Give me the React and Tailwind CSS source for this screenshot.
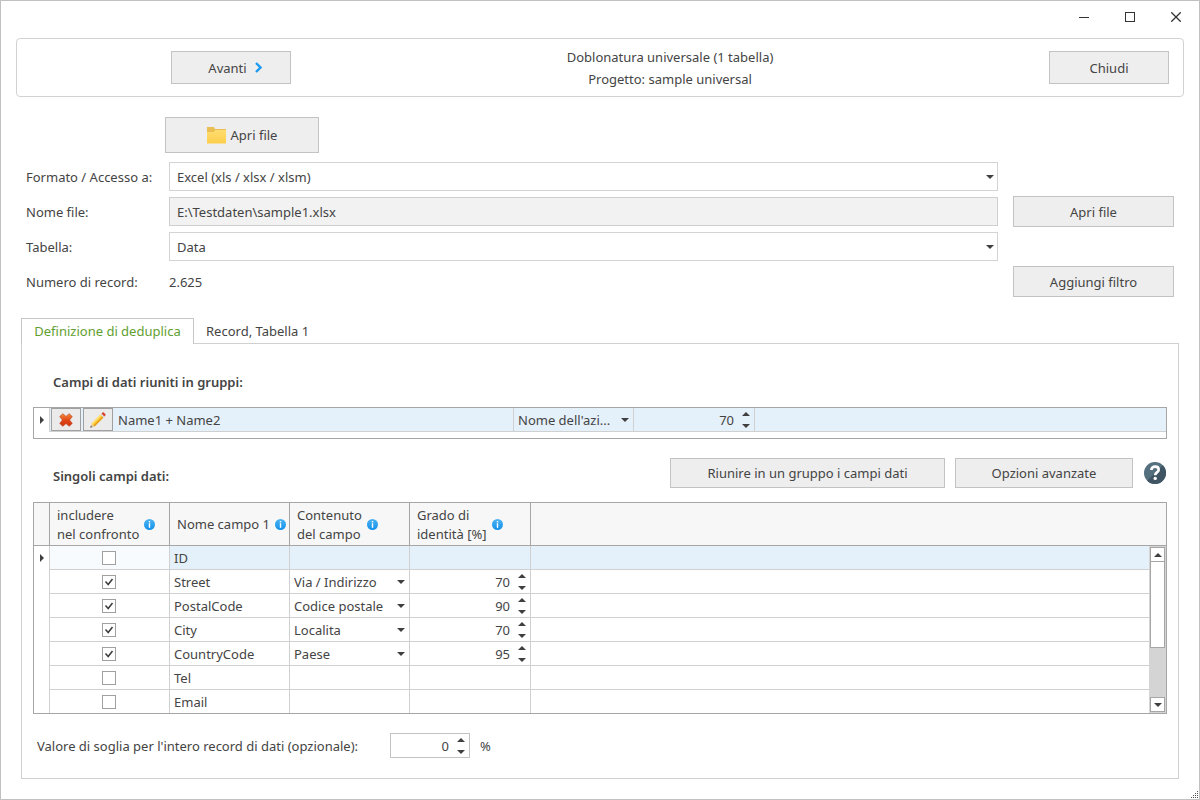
import React, { useState } from 'react';

const initialRows = [
  { name: 'ID', include: false, content: '', grade: '' },
  { name: 'Street', include: true, content: 'Via / Indirizzo', grade: '70' },
  { name: 'PostalCode', include: true, content: 'Codice postale', grade: '90' },
  { name: 'City', include: true, content: 'Localita', grade: '70' },
  { name: 'CountryCode', include: true, content: 'Paese', grade: '95' },
  { name: 'Tel', include: false, content: '', grade: '' },
  { name: 'Email', include: false, content: '', grade: '' },
];

const buttonStyle = 'border border-[#c3c3c3] bg-[#eeeeee] hover:bg-[#e4e4e4] text-center';

function ArrowDown({ className = '' }) {
  return (
    <svg className={`w-2 h-1 ${className}`} viewBox="0 0 8 4" aria-hidden="true">
      <path d="M0 0h8L4 4z" fill="#3f3f3f" />
    </svg>
  );
}

function ArrowUp({ className = '' }) {
  return (
    <svg className={`w-2 h-1 ${className}`} viewBox="0 0 8 4" aria-hidden="true">
      <path d="M0 4h8L4 0z" fill="#3f3f3f" />
    </svg>
  );
}

function RowMarker() {
  return (
    <svg className="w-1 h-2 mx-auto" viewBox="0 0 4 8" aria-hidden="true">
      <path d="M0 0v8l4-4z" fill="#3f3f3f" />
    </svg>
  );
}

function InfoIcon() {
  return (
    <svg className="w-[11px] h-[11px] shrink-0" viewBox="0 0 11 11" aria-hidden="true">
      <defs>
        <linearGradient id="info" x1="0" y1="0" x2="0" y2="1">
          <stop offset="0" stopColor="#4db4f2" />
          <stop offset="1" stopColor="#1290ea" />
        </linearGradient>
      </defs>
      <circle cx="5.5" cy="5.5" r="5.5" fill="url(#info)" />
      <rect x="4.8" y="2" width="1.4" height="1.4" fill="#fff" />
      <rect x="4.8" y="4.2" width="1.4" height="4.6" fill="#fff" />
    </svg>
  );
}

function FolderIcon() {
  return (
    <svg className="w-5 h-[17px]" viewBox="0 0 20 17" aria-hidden="true">
      <defs>
        <linearGradient id="folder" x1="0" y1="0" x2="0" y2="1">
          <stop offset="0" stopColor="#ffdc70" />
          <stop offset="1" stopColor="#ffcf4b" />
        </linearGradient>
      </defs>
      <path d="M0 0h7l1 2h11v4H0z" fill="#e9bf55" />
      <path d="M0 5h7l1-2h11v13.500H0z" fill="url(#folder)" />
    </svg>
  );
}

function DeleteIcon() {
  return (
    <svg className="w-[14px] h-[14px]" viewBox="0 0 14 14" aria-hidden="true">
      <defs>
        <linearGradient id="cross" x1="0" y1="0" x2="0" y2="1">
          <stop offset="0" stopColor="#f58a3c" />
          <stop offset="0.55" stopColor="#df4413" />
          <stop offset="1" stopColor="#cf3510" />
        </linearGradient>
      </defs>
      <path
        d="M3.8.7L7 3.400 10.200.7l3.100 2.900L10.600 7l2.700 3.400-3.100 2.900L7 10.600l-3.200 2.700L.7 10.400 3.400 7 .7 3.600z"
        fill="url(#cross)"
        stroke="#b8401a"
        strokeWidth="0.6"
        strokeLinejoin="round"
      />
    </svg>
  );
}

function PencilIcon() {
  return (
    <svg className="w-4 h-4" viewBox="0 0 16 16" aria-hidden="true">
      <path d="M.3 15.700L1.600 11.500 4.500 14.400z" fill="#e8c9a0" />
      <path d="M.3 15.700l.6-2 1.400 1.400z" fill="#4a4a4a" />
      <path d="M1.600 11.500L10.500 2.600l2.900 2.900-8.900 8.900z" fill="#fbc62e" />
      <path d="M1.600 11.500L10.500 2.600l1 1-8.900 8.900z" fill="#ffe27a" />
      <path d="M3.600 13.500l8.900-8.900.9.9-8.900 8.900z" fill="#e39a1c" />
      <path d="M10.500 2.600l1-1 2.900 2.900-1 1z" fill="#d5d8dc" />
      <path d="M11.500 1.600l.9-.9c.5-.5 1.100-.5 1.600 0l1.300 1.300c.5.5.5 1.100 0 1.600l-.9.9z" fill="#d8432f" />
    </svg>
  );
}

function HelpIcon() {
  return (
    <svg className="w-6 h-6" viewBox="0 0 24 24" aria-hidden="true">
      <circle cx="12" cy="12" r="11" fill="#54707e" />
      <path d="M19.800 4.200A11 11 0 0 1 4.200 19.800z" fill="#3f5563" />
      <path
        d="M8.400 9.100c0-2.200 1.500-3.500 3.700-3.500s3.600 1.200 3.600 3.100c0 2.700-3.500 2.700-3.500 5.500"
        fill="none"
        stroke="#fff"
        strokeWidth="2.6"
      />
      <circle cx="12.2" cy="17.4" r="1.7" fill="#fff" />
    </svg>
  );
}

function Spinner({ value, onChange, label, id }) {
  const step = (n) => onChange(String(Math.min(100, Math.max(0, Number(value) + n))));

  return (
    <div className="flex items-center h-full w-full pr-1">
      <input
        id={id}
        aria-label={label}
        type="text"
        inputMode="numeric"
        value={value}
        onChange={(e) => onChange(e.target.value)}
        className="min-w-0 flex-1 h-full text-right bg-transparent outline-none"
      />
      <div className="flex flex-col ml-2">
        <button type="button" aria-label="Aumenta" onClick={() => step(1)} className="flex h-2 items-start">
          <ArrowUp />
        </button>
        <button type="button" aria-label="Diminuisci" onClick={() => step(-1)} className="flex h-2 items-end">
          <ArrowDown />
        </button>
      </div>
    </div>
  );
}

function CellSelect({ value, label }) {
  return (
    <div className="relative h-full">
      <select
        aria-label={label}
        defaultValue={value}
        className="block appearance-none w-full h-full pl-1 pr-4 bg-transparent outline-none"
      >
        <option>{value}</option>
      </select>
      <ArrowDown className="absolute right-1 top-1/2 -translate-y-1/2 pointer-events-none" />
    </div>
  );
}

function FieldSelect({ id, value }) {
  return (
    <div className="relative h-full">
      <select
        id={id}
        defaultValue={value}
        className="block appearance-none w-full h-full pl-[7px] pr-5 bg-white border border-[#d4d4d4] outline-none"
      >
        <option>{value}</option>
      </select>
      <ArrowDown className="absolute right-1 top-1/2 -translate-y-1/2 pointer-events-none" />
    </div>
  );
}

function HeaderCell({ children, className = '' }) {
  return (
    <th className={`p-0 h-[43px] font-normal text-left border-r border-b border-[#a6a6a6] bg-[#f7f7f7] ${className}`}>
      <div className="flex items-center pt-px pl-[7px] mr-[3px] overflow-hidden whitespace-nowrap">{children}</div>
    </th>
  );
}

function FieldRow({ row, index, last, onChange }) {
  const selected = index === 0;
  const line = `p-0 border-[#d0d0d0] border-r ${last ? 'h-[23px]' : 'h-6 border-b'}`;
  const fill = selected ? 'bg-[#e5f1fa]' : '';

  return (
    <tr>
      <td className="p-0 border-r border-[#d0d0d0]">{selected && <RowMarker />}</td>
      <td className={`${line} ${selected ? 'bg-[#f7fbfe]' : ''}`}>
        <div className="flex justify-center pr-px">
          <input
            type="checkbox"
            aria-label={`Includere ${row.name}`}
            checked={row.include}
            onChange={(e) => onChange(index, { include: e.target.checked })}
            className="peer appearance-none w-[14px] h-[14px] border border-[#a0a0a0] bg-white"
          />
          <svg className="hidden peer-checked:block -ml-[14px] w-[14px] h-[14px] pointer-events-none" viewBox="0 0 14 14" aria-hidden="true">
            <path d="M3.500 6.500l2.700 3 4.300-5.500" fill="none" stroke="#404040" strokeWidth="1.6" />
          </svg>
        </div>
      </td>
      <td className={`${line} ${fill} pl-1`}>{row.name}</td>
      <td className={`${line} ${fill}`}>
        {row.content && (
          <div className="h-[23px]">
            <CellSelect value={row.content} label={`Contenuto di ${row.name}`} />
          </div>
        )}
      </td>
      <td className={`${line} ${fill}`}>
        {row.grade && (
          <div className="h-[23px]">
            <Spinner
              value={row.grade}
              label={`Grado di ${row.name}`}
              onChange={(grade) => onChange(index, { grade })}
            />
          </div>
        )}
      </td>
      <td className={`p-0 border-[#d0d0d0] ${last ? '' : 'border-b'} ${fill}`}></td>
      {index === 0 && (
        <td rowSpan={initialRows.length} className="p-0 align-top bg-[#d4d4d4]">
          <div className="flex flex-col h-[167px] p-px">
            <button type="button" aria-label="Scorri su" className="flex items-center justify-center w-[15px] h-[15px] border border-[#a6a6a6] bg-white">
              <ArrowUp />
            </button>
            <div className="w-[15px] h-[87px] -mt-px border border-[#a6a6a6] bg-white"></div>
            <button type="button" aria-label="Scorri giù" className="flex items-center justify-center w-[15px] h-[15px] mt-auto border border-[#a6a6a6] bg-white">
              <ArrowDown />
            </button>
          </div>
        </td>
      )}
    </tr>
  );
}

export default function App() {
  const [rows, setRows] = useState(initialRows);
  const [groupGrade, setGroupGrade] = useState('70');
  const [threshold, setThreshold] = useState('0');

  const updateRow = (index, changes) => {
    setRows(rows.map((row, i) => (i === index ? { ...row, ...changes } : row)));
  };

  return (
    <div className="relative min-h-screen flex flex-col border border-[#c1c1c1] bg-white text-[#444444] text-[13px] leading-5 font-['Noto_Sans',sans-serif]">
      {/* Window buttons */}
      <div className="flex items-center justify-end gap-9 h-[37px] pr-[18px] pb-[6px]">
        <button type="button" aria-label="Riduci a icona">
          <svg className="w-[10px] h-[10px]" viewBox="0 0 10 10"><path d="M0 5.500h10" stroke="#333" /></svg>
        </button>
        <button type="button" aria-label="Ingrandisci">
          <svg className="w-[10px] h-[10px]" viewBox="0 0 10 10"><rect x="0.5" y="0.5" width="9" height="9" fill="none" stroke="#333" /></svg>
        </button>
        <button type="button" aria-label="Chiudi finestra">
          <svg className="w-[10px] h-[10px]" viewBox="0 0 10 10"><path d="M.3.3l9.400 9.400M9.700.3L.3 9.700" stroke="#333" strokeWidth="1.3" /></svg>
        </button>
      </div>

      {/* Wizard header */}
      <header className="flex items-center h-[59px] mx-[15px] pl-[154px] pr-[14px] border border-[#d2d2d2] rounded">
        <button type="button" className={`${buttonStyle} w-[120px] h-[33px] pl-2 flex items-center justify-center gap-2`}>
          Avanti
          <svg className="w-[7px] h-[11px]" viewBox="0 0 7 11" aria-hidden="true">
            <path d="M1 1l4.500 4.500L1 10" fill="none" stroke="#1a9af0" strokeWidth="2.4" />
          </svg>
        </button>
        <div className="flex-1 text-center leading-[22px]">
          <h1>Doblonatura universale (1 tabella)</h1>
          <p>Progetto: sample universal</p>
        </div>
        <button type="button" className={`${buttonStyle} w-[120px] h-[33px]`}>Chiudi</button>
      </header>

      <button type="button" className={`${buttonStyle} flex items-center justify-center gap-1 w-[154px] h-9 mt-5 ml-[164px]`}>
        <FolderIcon />
        Apri file
      </button>

      {/* Source file */}
      <div className="grid grid-cols-[128px_1fr_161px] auto-rows-[29px] gap-x-[15px] gap-y-[6px] items-center mt-[9px] px-[25px]">
        <label htmlFor="format" className="whitespace-nowrap">Formato / Accesso a:</label>
        <FieldSelect id="format" value="Excel (xls / xlsx / xlsm)" />
        <span></span>

        <label htmlFor="filename">Nome file:</label>
        <input
          id="filename"
          readOnly
          value="E:\Testdaten\sample1.xlsx"
          className="w-full h-full px-[7px] bg-[#f2f2f2] border border-[#cfcfcf] outline-none"
        />
        <button type="button" className={`${buttonStyle} h-[31px]`}>Apri file</button>

        <label htmlFor="table">Tabella:</label>
        <FieldSelect id="table" value="Data" />
        <span></span>

        <span>Numero di record:</span>
        <span>2.625</span>
        <button type="button" className={`${buttonStyle} h-[31px]`}>Aggiungi filtro</button>
      </div>

      {/* Tabs */}
      <div role="tablist" className="flex mt-[22px] ml-5">
        <button type="button" role="tab" aria-selected="true" className="relative w-[173px] h-[26px] pb-px -mb-px border border-b-0 border-[#c6c6c6] bg-white text-[#5fa02f] whitespace-nowrap">
          Definizione di deduplica
        </button>
        <button type="button" role="tab" aria-selected="false" className="px-3 h-[25px]">
          Record, Tabella 1
        </button>
      </div>

      <main className="flex-1 mx-5 mb-5 px-[11px] pt-7 border border-[#d0d0d0]">
        <h2 className="pl-5 font-semibold">Campi di dati riuniti in gruppi:</h2>

        <div className="mt-[15px] h-8 border border-[#a6a6a6]">
          <table className="w-full table-fixed border-separate border-spacing-0">
            <colgroup>
              <col className="w-4" />
              <col className="w-[464px]" />
              <col className="w-[120px]" />
              <col className="w-[121px]" />
              <col />
            </colgroup>
            <tbody>
              <tr>
                <td className="p-0 h-6 border-r border-[#d0d0d0]"><RowMarker /></td>
                <td className="p-0 h-6 bg-[#e5f1fa] border-r border-b border-[#d0d0d0]">
                  <div className="flex items-center h-[23px] gap-[2px] pl-px">
                    <button type="button" aria-label="Elimina gruppo" className="flex items-center justify-center w-[30px] h-[23px] border border-[#a0a0a0] bg-[#ebebeb]">
                      <DeleteIcon />
                    </button>
                    <button type="button" aria-label="Modifica gruppo" className="flex items-center justify-center w-[30px] h-[23px] border border-[#a0a0a0] bg-[#ebebeb]">
                      <PencilIcon />
                    </button>
                    <span className="pl-[3px]">Name1 + Name2</span>
                  </div>
                </td>
                <td className="p-0 h-6 bg-[#e5f1fa] border-r border-b border-[#d0d0d0]">
                  <div className="h-[23px]">
                    <CellSelect value="Nome dell'azi..." label="Contenuto del gruppo" />
                  </div>
                </td>
                <td className="p-0 h-6 bg-[#e5f1fa] border-r border-b border-[#d0d0d0]">
                  <div className="h-[23px]">
                    <Spinner value={groupGrade} onChange={setGroupGrade} label="Grado del gruppo" />
                  </div>
                </td>
                <td className="p-0 h-6 bg-[#e5f1fa] border-b border-[#d0d0d0]"></td>
              </tr>
            </tbody>
          </table>
        </div>

        <div className="flex items-center gap-[10px] h-[30px] mt-[19px]">
          <h2 className="flex-1 pl-5 pt-[6px] font-semibold">Singoli campi dati:</h2>
          <button type="button" className={`${buttonStyle} w-[275px] h-[30px]`}>Riunire in un gruppo i campi dati</button>
          <button type="button" className={`${buttonStyle} w-[178px] h-[30px]`}>Opzioni avanzate</button>
          <button type="button" aria-label="Guida"><HelpIcon /></button>
        </div>

        <div className="mt-[14px] border border-[#a6a6a6]">
          <table className="w-full table-fixed border-separate border-spacing-0">
            <colgroup>
              <col className="w-4" />
              <col className="w-[120px]" />
              <col className="w-[120px]" />
              <col className="w-[120px]" />
              <col className="w-[121px]" />
              <col />
              <col className="w-[17px]" />
            </colgroup>
            <thead>
              <tr className="leading-[19px]">
                <HeaderCell />
                <HeaderCell>
                  <span className="mr-[5px]">includere<br />nel confronto</span>
                  <InfoIcon />
                </HeaderCell>
                <HeaderCell>
                  <span className="mr-[5px]">Nome campo 1</span>
                  <InfoIcon />
                </HeaderCell>
                <HeaderCell>
                  <span className="mr-[5px]">Contenuto<br />del campo</span>
                  <InfoIcon />
                </HeaderCell>
                <HeaderCell>
                  <span className="mr-[5px]">Grado di<br />identità [%]</span>
                  <InfoIcon />
                </HeaderCell>
                <th colSpan={2} className="p-0 border-b border-[#a6a6a6] bg-[#f7f7f7]"></th>
              </tr>
            </thead>
            <tbody>
              {rows.map((row, index) => (
                <FieldRow
                  key={row.name}
                  row={row}
                  index={index}
                  last={index === rows.length - 1}
                  onChange={updateRow}
                />
              ))}
            </tbody>
          </table>
        </div>

        <div className="flex items-center mt-[19px] pl-1">
          <label htmlFor="threshold" className="w-[353px] whitespace-nowrap">
            Valore di soglia per l'intero record di dati (opzionale):
          </label>
          <div className="w-20 h-[25px] border border-[#c3c3c3]">
            <Spinner id="threshold" value={threshold} onChange={setThreshold} />
          </div>
          <span className="pl-[10px]">%</span>
        </div>
      </main>

      {/* Resize grip */}
      <svg className="absolute right-px bottom-px w-[7px] h-[7px]" viewBox="0 0 7 7" aria-hidden="true">
        <path d="M6 0h1v1H6zM4 2h1v1H4zM6 2h1v1H6zM2 4h1v1H2zM4 4h1v1H4zM6 4h1v1H6zM0 6h1v1H0zM2 6h1v1H2zM4 6h1v1H4zM6 6h1v1H6z" fill="#555" />
      </svg>
    </div>
  );
}
